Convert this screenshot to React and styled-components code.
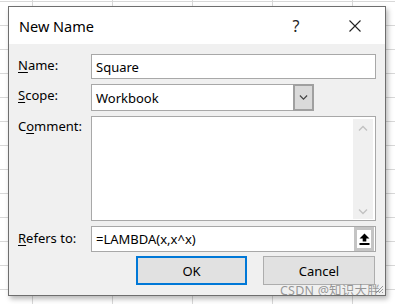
import React from 'react';
import styled, { createGlobalStyle } from 'styled-components';

const Global = createGlobalStyle`
  html, body { margin: 0; padding: 0; }
  body {
    font-family: "Noto Sans", "Open Sans", sans-serif;
    background: #fff;
  }
`;

const Sheet = styled.div`
  position: relative;
  width: 395px;
  height: 304px;
  overflow: hidden;
  box-sizing: border-box;
  padding: 6px 0 0 8px;
  background-color: #fff;
  background-image:
    linear-gradient(to right, #d8d8d8 1px, transparent 1px),
    linear-gradient(to bottom, #d8d8d8 1px, transparent 1px);
  background-size: 80px 24px;
  background-position: 32px 1px;
`;

const Dialog = styled.div`
  width: 378px;
  height: 290px;
  box-sizing: border-box;
  border: 1px solid #6e6e6e;
  background: #f0f0f0;
  box-shadow: 2px 3px 5px rgba(0, 0, 0, 0.28);
  display: flex;
  flex-direction: column;
  position: relative;
`;

const TitleBar = styled.div`
  height: 37px;
  background: #fff;
  display: flex;
  align-items: center;
  padding-left: 10px;
  color: #000;
`;

const Title = styled.div`
  flex: 1;
  font-size: 14.5px;
  margin-top: 1px;
`;

const TitleBtn = styled.div`
  width: ${p => p.$w}px;
  margin-right: ${p => p.$mr}px;
  display: flex;
  justify-content: center;
  align-items: center;
  font-size: 16px;
  color: #222;
`;

const Body = styled.div`
  flex: 1;
  padding: 10px 9px 0 9px;
  display: flex;
  flex-direction: column;
  gap: 5px;
`;

const Row = styled.div`
  display: flex;
  height: ${p => p.$h}px;
`;

const Label = styled.div`
  width: 73px;
  font-size: 13px;
  line-height: 17px;
  padding-top: ${p => p.$pt || 2}px;
  color: #000;
  u { text-decoration-thickness: 1px; text-underline-offset: 2px; }
`;

const Field = styled.div`
  flex: ${p => (p.$w ? 'none' : '1')};
  width: ${p => (p.$w ? `${p.$w}px` : 'auto')};
  box-sizing: border-box;
  border: 1px solid #a8a8a8;
  background: #fff;
  display: flex;
  align-items: ${p => (p.$multi ? 'stretch' : 'center')};
  font-size: 13px;
  color: #000;
  position: relative;
`;

const FieldText = styled.div`
  flex: 1;
  padding-left: 4px;
`;

const DropBtn = styled.div`
  width: 21px;
  align-self: stretch;
  box-sizing: border-box;
  margin: -1px -1px -1px 0;
  border: 2px solid #a0a0a0;
  background: #dadada;
  display: flex;
  align-items: center;
  justify-content: center;
`;

const ScrollTrack = styled.div`
  width: 20px;
  align-self: stretch;
  margin: 2px 2px 1px 0;
  background: #f0f0f0;
  display: flex;
  flex-direction: column;
  justify-content: space-between;
  align-items: center;
  padding: 6px 0 4px;
`;

const RefBtn = styled.div`
  width: 20px;
  height: 24px;
  box-sizing: border-box;
  margin-right: 1px;
  border: 3px solid #c4c4c4;
  background: #fff;
  display: flex;
  align-items: center;
  justify-content: center;
`;

const ButtonRow = styled.div`
  display: flex;
  justify-content: flex-end;
  gap: 16px;
  margin-top: -1px;
  padding-right: 1px;
`;

const Button = styled.div`
  width: ${p => p.$w}px;
  height: 29px;
  box-sizing: border-box;
  background: #e1e1e1;
  border: ${p => (p.$primary ? '2px solid #0078d7' : '1px solid #adadad')};
  display: flex;
  align-items: center;
  justify-content: center;
  font-size: 13px;
  color: #000;
`;

const Grip = styled.svg`
  position: absolute;
  right: 1px;
  bottom: 1px;
`;

const Watermark = styled.div`
  position: absolute;
  left: 280px;
  top: 280px;
  font-size: 12.5px;
  color: rgba(120, 120, 120, 0.75);
  font-family: "Noto Sans", "Noto Sans CJK SC", sans-serif;
  letter-spacing: 0.2px;
`;

const Chevron = ({ up, color = '#333', w = 9 }) => (
  <svg width={w} height={w / 2 + 1} viewBox="0 0 10 6">
    <path d={up ? 'M1 5.5 L5 1.5 L9 5.5' : 'M1 0.5 L5 4.5 L9 0.5'} stroke={color} strokeWidth="1.3" fill="none" />
  </svg>
);

export default function App() {
  return (
    <>
      <Global />
      <Sheet>
        <Dialog>
          <TitleBar>
            <Title>New Name</Title>
            <TitleBtn $w={40} $mr={18}>?</TitleBtn>
            <TitleBtn $w={41} $mr={10}>
              <svg width="12" height="12" viewBox="0 0 12 12">
                <path d="M0.5 0.5 L11.5 11.5 M11.5 0.5 L0.5 11.5" stroke="#222" strokeWidth="1.1" />
              </svg>
            </TitleBtn>
          </TitleBar>
          <Body>
            <Row $h={25}>
              <Label $pt={3}><u>N</u>ame:</Label>
              <Field><FieldText>Square</FieldText></Field>
            </Row>
            <Row $h={27}>
              <Label $pt={3}><u>S</u>cope:</Label>
              <Field $w={223}>
                <FieldText>Workbook</FieldText>
                <DropBtn><Chevron color="#444" w={9} /></DropBtn>
              </Field>
            </Row>
            <Row $h={105}>
              <Label>C<u>o</u>mment:</Label>
              <Field $multi>
                <FieldText />
                <ScrollTrack>
                  <Chevron up color="#c2c2c2" w={10} />
                  <Chevron color="#c2c2c2" w={10} />
                </ScrollTrack>
              </Field>
            </Row>
            <Row $h={26}>
              <Label $pt={4}><u>R</u>efers to:</Label>
              <Field>
                <FieldText>=LAMBDA(x,x^x)</FieldText>
                <RefBtn>
                  <svg width="11" height="12" viewBox="0 0 11 12">
                    <path d="M5.5 0.5 L10.5 5.5 L7.3 5.5 L7.3 8.5 L3.7 8.5 L3.7 5.5 L0.5 5.5 Z" fill="#000" />
                    <rect x="0.5" y="10" width="10" height="2" fill="#000" />
                  </svg>
                </RefBtn>
              </Field>
            </Row>
            <ButtonRow>
              <Button $w={111} $primary>OK</Button>
              <Button $w={112}>Cancel</Button>
            </ButtonRow>
          </Body>
          <Grip width="11" height="11" viewBox="0 0 11 11">
            <path d="M10 3 L3 10 M10 6 L6 10 M10 9 L9 10" stroke="#9a9a9a" strokeWidth="1" />
          </Grip>
        </Dialog>
        <Watermark>CSDN @知识大胖</Watermark>
      </Sheet>
    </>
  );
}
